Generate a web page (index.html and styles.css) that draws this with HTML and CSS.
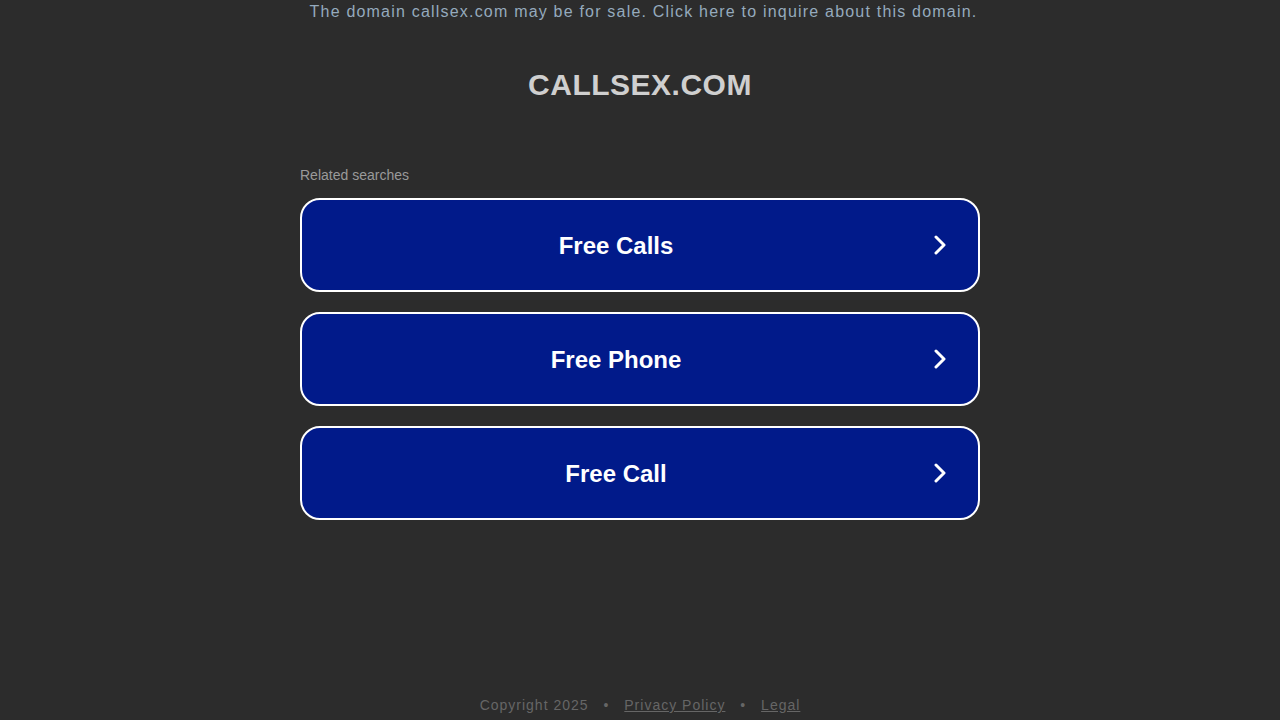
FILE: index.html
```html
<!DOCTYPE html>
<html>
<head>
<meta charset="utf-8">
<link rel="stylesheet" href="styles.css">
</head>
<body>
<div class="page">
  <div class="notice">The domain callsex.com may be for sale. Click here to inquire about this domain.</div>
  <h1 class="title">CALLSEX.COM</h1>
  <div class="related">
    <div class="related-label">Related searches</div>
    <a class="btn" href="#"><span class="btn-text">Free Calls</span><svg class="chev" viewBox="0 0 12 20" width="12" height="20"><path d="M2 2 L10 10 L2 18" fill="none" stroke="#fff" stroke-width="3" stroke-linecap="round" stroke-linejoin="round"/></svg></a>
    <a class="btn" href="#"><span class="btn-text">Free Phone</span><svg class="chev" viewBox="0 0 12 20" width="12" height="20"><path d="M2 2 L10 10 L2 18" fill="none" stroke="#fff" stroke-width="3" stroke-linecap="round" stroke-linejoin="round"/></svg></a>
    <a class="btn" href="#"><span class="btn-text">Free Call</span><svg class="chev" viewBox="0 0 12 20" width="12" height="20"><path d="M2 2 L10 10 L2 18" fill="none" stroke="#fff" stroke-width="3" stroke-linecap="round" stroke-linejoin="round"/></svg></a>
  </div>
  <div class="spacer"></div>
  <div class="footer">Copyright 2025 <span class="dot">•</span> <a href="#">Privacy Policy</a> <span class="dot">•</span> <a href="#">Legal</a></div>
</div>
</body>
</html>
```

FILE: styles.css
```css
html, body {
  margin: 0;
  padding: 0;
  background: #2c2c2c;
  font-family: Arial, "Liberation Sans", Helvetica, sans-serif;
}
.page {
  height: 720px;
  display: flex;
  flex-direction: column;
  align-items: center;
}
.notice {
  color: #95aabd;
  font-size: 16px;
  letter-spacing: 1.2px;
  line-height: 24px;
  text-align: center;
  padding-left: 7px;
}
.title {
  margin: 42px 0 0;
  color: #cfcfcf;
  font-size: 30px;
  font-weight: bold;
  letter-spacing: 0.5px;
  line-height: 38px;
}
.related {
  margin-top: 62px;
  width: 680px;
  display: flex;
  flex-direction: column;
  gap: 20px;
}
.related-label {
  color: #9a9a9a;
  font-size: 14px;
  line-height: 18px;
  margin-bottom: -6px;
}
.btn {
  box-sizing: border-box;
  height: 94px;
  border: 2px solid #ffffff;
  border-radius: 20px;
  background: #011a8a;
  display: flex;
  align-items: center;
  text-decoration: none;
}
.btn-text {
  flex: 1;
  text-align: center;
  color: #ffffff;
  font-size: 24px;
  font-weight: bold;
  padding-top: 2px;
}
.chev {
  margin-left: 4px;
  margin-right: 32px;
}
.spacer {
  flex: 1;
}
.footer {
  color: #666666;
  font-size: 14px;
  letter-spacing: 1px;
  line-height: 18px;
  margin-bottom: 6px;
}
.footer a {
  color: #666666;
}
.dot {
  margin: 0 10px;
}
```
